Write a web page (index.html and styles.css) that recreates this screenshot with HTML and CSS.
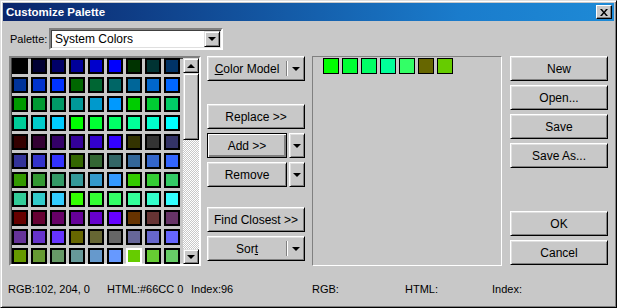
FILE: index.html
```html
<!DOCTYPE html>
<html lang="en">
<head>
    <meta charset="UTF-8">
    <title>Customize Palette</title>
    <link rel="stylesheet" href="styles.css">
</head>
<body>
    <div class="window">
        <div class="titlebar">
            <span class="title">Customize Palette</span>
            <span class="close">
                <svg width="8" height="7" viewBox="0 0 8 7"><path d="M0 0h2l2 2.5L6 0h2L5 3.5 8 7H6L4 4.5 2 7H0l3-3.5z" fill="#000"/></svg>
            </span>
        </div>
        <div class="content">
            <div class="palette-row">
                <label>Palette:</label>
                <div class="combo">
                    <span class="combo-text">System Colors</span>
                    <span class="combo-btn"><i class="arrow-down"></i></span>
                </div>
            </div>
            <div class="main">
                <div class="grid-box">
                    <div class="cells" id="cells"></div>
                    <div class="scrollbar">
                        <span class="scroll-btn"><i class="arrow-up"></i></span>
                        <span class="thumb"></span>
                        <span class="track"></span>
                        <span class="scroll-btn"><i class="arrow-down"></i></span>
                    </div>
                </div>
                <div class="col">
                    <div class="btn split"><span class="label"><u>C</u>olor Model</span><span class="sep"></span><i class="arrow-down"></i></div>
                    <div class="btn gap-top">Replace &gt;&gt;</div>
                    <div class="pair">
                        <div class="btn wide default">Add &gt;&gt;</div>
                        <div class="btn drop"><i class="arrow-down"></i></div>
                    </div>
                    <div class="pair">
                        <div class="btn wide">Remove</div>
                        <div class="btn drop"><i class="arrow-down"></i></div>
                    </div>
                    <div class="btn gap-top2">Find Closest &gt;&gt;</div>
                    <div class="btn split"><span class="label">Sor<u>t</u></span><span class="sep"></span><i class="arrow-down"></i></div>
                </div>
                <div class="custom-box">
                    <span class="swatch" style="background:#00ff00"></span>
                    <span class="swatch" style="background:#00ff33"></span>
                    <span class="swatch" style="background:#00ff66"></span>
                    <span class="swatch" style="background:#00ff99"></span>
                    <span class="swatch" style="background:#33ff66"></span>
                    <span class="swatch" style="background:#666600"></span>
                    <span class="swatch" style="background:#66cc00"></span>
                </div>
                <div class="col">
                    <div class="btn">New</div>
                    <div class="btn">Open...</div>
                    <div class="btn">Save</div>
                    <div class="btn">Save As...</div>
                    <div class="btn gap-top3">OK</div>
                    <div class="btn">Cancel</div>
                </div>
            </div>
            <div class="status">
                <span class="s1">RGB:102, 204, 0</span>
                <span class="s2">HTML:#66CC 0</span>
                <span class="s3">Index:96</span>
                <span class="s4">RGB:</span>
                <span class="s5">HTML:</span>
                <span class="s6">Index:</span>
            </div>
        </div>
    </div>
    <script>
        var cells = document.getElementById('cells');
        var hex = ['00', '33', '66', '99', 'CC', 'FF'];
        for(var i = 0; i < 99; i++){
            var cell = document.createElement('span');
            var r = Math.floor(i / 36);
            var g = Math.floor(i / 6) % 6;
            var b = i % 6;
            cell.className = i == 96 ? 'cell selected' : 'cell';
            cell.style.background = '#' + hex[r] + hex[g] + hex[b];
            cells.appendChild(cell);
        }
    </script>
</body>
</html>
```

FILE: styles.css
```css
*{
    box-sizing: border-box;
}
body{
    margin: 0;
    font-family: "Liberation Sans", Arial, sans-serif;
    font-size: 11px;
    color: #000;
    background: #c8c8c8;
}
.window{
    width: 617px;
    height: 308px;
    background: #c8c8c8;
    border: 1px solid;
    border-color: #dfdfdf #000 #000 #dfdfdf;
    box-shadow: inset 1px 1px #fff, inset -1px -1px #808080;
    padding: 2px;
}
.titlebar{
    height: 18px;
    background: linear-gradient(to right, #0a246a, #1a7ccc 75%, #1e8ad6);
    display: flex;
    align-items: center;
    justify-content: space-between;
    padding: 0 2px 0 3px;
}
.title{
    color: #fff;
    font-weight: bold;
    font-size: 11.5px;
}
.close{
    width: 16px;
    height: 14px;
    background: #c8c8c8;
    border: 1px solid;
    border-color: #fff #000 #000 #fff;
    box-shadow: inset -1px -1px #808080;
    display: flex;
    align-items: center;
    justify-content: center;
}
.content{
    padding: 0 0 0 6px;
}
.palette-row{
    display: flex;
    align-items: center;
    margin-top: 7px;
    height: 22px;
}
.palette-row label{
    margin-left: 1px;
    width: 39px;
}
.combo{
    width: 174px;
    height: 22px;
    background: #fff;
    border: 2px solid;
    border-color: #808080 #fff #fff #808080;
    box-shadow: inset 1px 1px #404040, inset -1px -1px #dfdfdf;
    display: flex;
    align-items: center;
    justify-content: space-between;
    padding: 1px;
}
.combo-text{
    padding-left: 3px;
    font-size: 12px;
}
.combo-btn{
    width: 16px;
    height: 16px;
    background: #c8c8c8;
    border: 1px solid;
    border-color: #dfdfdf #000 #000 #dfdfdf;
    box-shadow: inset 1px 1px #fff, inset -1px -1px #808080;
    display: flex;
    align-items: center;
    justify-content: center;
}
.arrow-down{
    width: 0;
    height: 0;
    border-left: 4px solid transparent;
    border-right: 4px solid transparent;
    border-top: 4px solid #000;
}
.arrow-up{
    width: 0;
    height: 0;
    border-left: 4px solid transparent;
    border-right: 4px solid transparent;
    border-bottom: 4px solid #000;
}
.main{
    display: flex;
    margin-top: 6px;
    height: 210px;
}
.grid-box{
    width: 192px;
    border: 2px solid;
    border-color: #808080 #fff #fff #808080;
    box-shadow: inset 1px 1px #404040, inset -1px -1px #dfdfdf;
    display: flex;
    padding-left: 1px;
    gap: 3px;
}
.cells{
    width: 168px;
    display: grid;
    grid-template-columns: repeat(9, 16px);
    grid-auto-rows: 16px;
    gap: 3px;
}
.cell{
    border: 2px solid #000;
}
.cell.selected{
    border-color: #fff;
}
.scrollbar{
    width: 16px;
    display: flex;
    flex-direction: column;
}
.scroll-btn{
    height: 15px;
    background: #c8c8c8;
    border: 1px solid;
    border-color: #dfdfdf #000 #000 #dfdfdf;
    box-shadow: inset 1px 1px #fff, inset -1px -1px #808080;
    display: flex;
    align-items: center;
    justify-content: center;
}
.thumb{
    height: 67px;
    background: #c8c8c8;
    border: 1px solid;
    border-color: #dfdfdf #000 #000 #dfdfdf;
    box-shadow: inset 1px 1px #fff, inset -1px -1px #808080;
}
.track{
    flex: 1;
    background: repeating-conic-gradient(#fff 0 25%, #c8c8c8 0 50%) 0 0 / 2px 2px;
}
.col{
    width: 98px;
    display: flex;
    flex-direction: column;
    gap: 4px;
}
.main > .col:nth-child(2){
    margin-left: 6px;
}
.main > .col:nth-child(4){
    margin-left: 8px;
}
.btn{
    height: 25px;
    background: #c8c8c8;
    border: 1px solid;
    border-color: #fff #000 #000 #fff;
    box-shadow: inset 1px 1px #dfdfdf, inset -1px -1px #808080;
    display: flex;
    align-items: center;
    justify-content: center;
    font-size: 12px;
}
.btn.gap-top{
    margin-top: 19px;
}
.btn.gap-top2{
    margin-top: 16px;
}
.btn.gap-top3{
    margin-top: 39px;
}
.split{
    justify-content: flex-start;
}
.split .label{
    width: 78px;
    text-align: center;
}
.split .sep{
    width: 2px;
    height: 15px;
    border-left: 1px solid #808080;
    border-right: 1px solid #fff;
    margin-right: 4px;
}
.pair{
    display: flex;
    gap: 2px;
}
.pair .wide{
    width: 80px;
}
.pair .drop{
    width: 16px;
}
.btn.default{
    border-color: #000;
    box-shadow: inset 1px 1px #fff, inset -1px -1px #808080, inset -2px -2px #808080;
}
.custom-box{
    width: 190px;
    margin-left: 7px;
    border: 1px solid;
    border-color: #808080 #fff #fff #808080;
    padding: 1px 0 0 10px;
    display: flex;
    align-items: flex-start;
    gap: 3px;
}
.swatch{
    width: 16px;
    height: 16px;
    border: 1px solid #000;
    flex: none;
}
.status{
    display: flex;
    margin: 17px 0 0 -1px;
    height: 13px;
    line-height: 13px;
}
.s1{ width: 99px; }
.s2{ width: 84px; }
.s3{ width: 121px; }
.s4{ width: 93px; }
.s5{ width: 87px; }
```
